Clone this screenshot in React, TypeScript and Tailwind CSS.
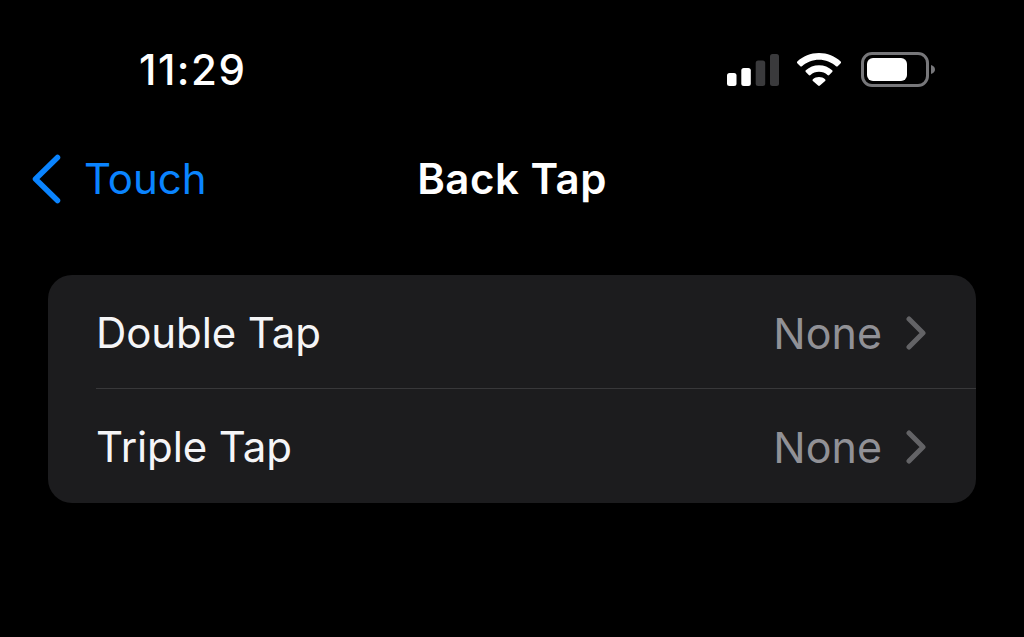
const SignalIcon = () => (
  <svg width="52" height="32" viewBox="0 0 52 32" className="block">
    <rect x="0" y="19" width="9.500" height="13" rx="2.500" fill="#fff" />
    <rect x="14.300" y="14" width="9.500" height="18" rx="2.500" fill="#fff" />
    <rect x="28.700" y="6.500" width="9.500" height="25.500" rx="2.500" fill="#3a3a3c" />
    <rect x="43" y="0" width="9" height="32" rx="2.500" fill="#3a3a3c" />
  </svg>
);

const WifiIcon = () => (
  <svg width="46" height="33" viewBox="0 0 46 33" className="block">
    <path
      d="M23 0C14.600 0 7 3.200 1.300 8.500c-.5.5-.5 1.200 0 1.700l3 3c.5.5 1.200.5 1.700 0C10.500 9.200 16.500 6.700 23 6.700s12.500 2.500 17 6.500c.5.5 1.200.5 1.700 0l3-3c.5-.5.5-1.200 0-1.700C39 3.200 31.400 0 23 0Z"
      fill="#fff"
    />
    <path
      d="M23 12.200c-5.100 0-9.700 1.900-13.200 5.100-.5.5-.5 1.200 0 1.700l3 3c.5.5 1.200.5 1.700 0 2.300-2 5.200-3.200 8.500-3.200s6.200 1.200 8.500 3.200c.5.5 1.200.5 1.700 0l3-3c.5-.5.500-1.200 0-1.700-3.500-3.200-8.100-5.100-13.200-5.100Z"
      fill="#fff"
    />
    <path
      d="M23 24c-2.400 0-4.500.9-6.100 2.300-.5.5-.5 1.200 0 1.700l5.200 4.600c.5.5 1.300.5 1.800 0l5.200-4.600c.5-.5.5-1.200 0-1.700C27.500 24.900 25.400 24 23 24Z"
      fill="#fff"
    />
  </svg>
);

const BatteryIcon = () => (
  <svg width="74" height="35" viewBox="0 0 74 35" className="block">
    <rect x="1.500" y="1.500" width="65" height="32" rx="9.500" fill="none" stroke="#77777a" strokeWidth="3" />
    <rect x="6" y="6" width="40" height="23" rx="6" fill="#fff" />
    <path d="M70 13c2.500.6 4 2.300 4 4.500S72.500 21.400 70 22Z" fill="#77777a" />
  </svg>
);

const BackChevron = () => (
  <svg width="30" height="50" viewBox="0 0 30 50" className="block">
    <path
      d="M26.500 3.500 4.500 25l22 21.500"
      fill="none"
      stroke="#0a84ff"
      strokeWidth="5.500"
      strokeLinecap="round"
      strokeLinejoin="round"
    />
  </svg>
);

const RowChevron = () => (
  <svg width="20" height="34" viewBox="0 0 20 34" className="block">
    <path
      d="M3 3l14 14L3 31"
      fill="none"
      stroke="#636366"
      strokeWidth="5"
      strokeLinecap="round"
      strokeLinejoin="round"
    />
  </svg>
);

const rows = ['Double Tap', 'Triple Tap'];

export default function App() {
  return (
    <div className="w-[1024px] h-[637px] overflow-hidden bg-black text-white font-['Inter',sans-serif]">
      {/* Status bar */}
      <div className="h-[139px] flex items-start justify-between pl-[139px] pr-[89px]">
        <span className="mt-[45px] text-[42px] leading-[50px] font-medium tracking-[1.500px]">11:29</span>
        <div className="mt-[52px] flex items-center">
          <SignalIcon />
          <div className="ml-[17px]">
            <WifiIcon />
          </div>
          <div className="ml-[19px]">
            <BatteryIcon />
          </div>
        </div>
      </div>

      {/* Nav bar */}
      <div className="h-[80px] grid grid-cols-[1fr_auto_1fr] items-center">
        <div className="flex items-center pl-[31px] gap-[23px] text-[#0a84ff]">
          <BackChevron />
          <span className="text-[42px] leading-[50px]">Touch</span>
        </div>
        <h1 className="text-[42px] leading-[50px] font-semibold tracking-[0.500px]">Back Tap</h1>
        <div />
      </div>

      {/* Settings list */}
      <div className="mt-[56px] mx-[48px] w-[928px] h-[228px] rounded-[24px] bg-[#1c1c1e]">
        {rows.map((row, i) => (
          <div key={row} className="h-[114px] pl-[48px]">
            <div
              className={`h-full flex items-center justify-between pr-[50px] pt-[2px] ${
                i === 0 ? 'border-b border-[#38383a]' : ''
              }`}
            >
              <span className="text-[42px] leading-[50px] text-[#f5f5f7] tracking-[-0.1px]">{row}</span>
              <div className="flex items-center gap-[24px]">
                <span className="text-[43px] leading-[50px] text-[#919196]">None</span>
                <RowChevron />
              </div>
            </div>
          </div>
        ))}
      </div>
    </div>
  );
}
